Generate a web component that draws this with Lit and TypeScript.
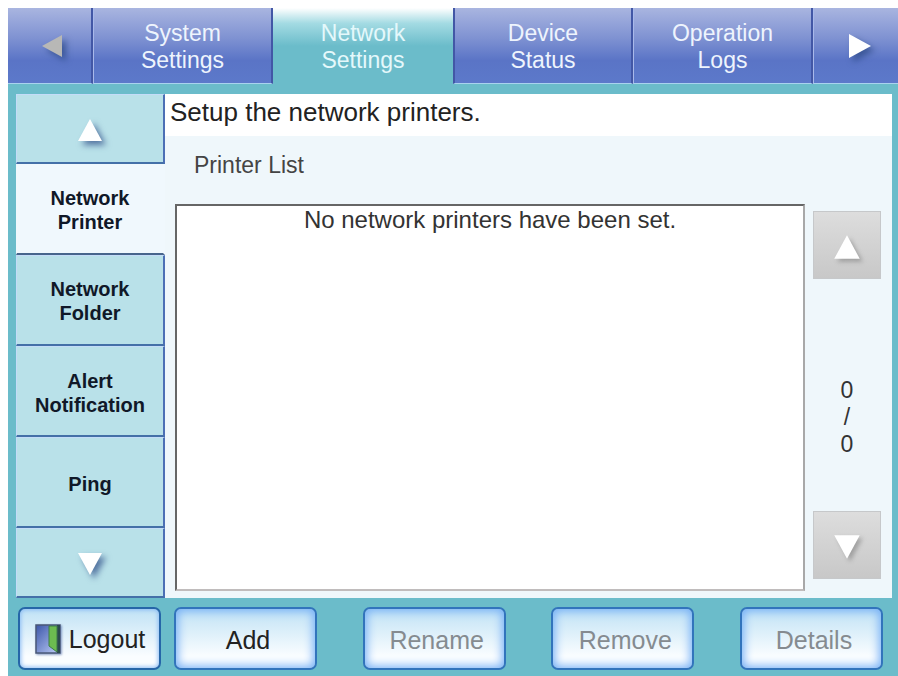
import { LitElement, html, css, svg } from "lit";
import { customElement, state } from "lit/decorators.js";
import { classMap } from "lit/directives/class-map.js";

const arrows: Record<string, string> = {
  up: "M16 5 L28 27 L4 27 Z",
  down: "M4 5 L28 5 L16 27 Z",
  left: "M5 16 L25 5 L25 27 Z",
  right: "M6 4 L28 16 L6 28 Z",
};

function arrow(direction: string, kind: string) {
  return html`<svg class="arrow ${kind}" viewBox="0 0 32 32" aria-hidden="true">
    ${svg`<path d=${arrows[direction]} />`}
  </svg>`;
}

const tabs = [
  ["System", "Settings"],
  ["Network", "Settings"],
  ["Device", "Status"],
  ["Operation", "Logs"],
];

const sections = [["Network", "Printer"], ["Network", "Folder"], ["Alert", "Notification"], ["Ping"]];

@customElement("app-root")
export class AppRoot extends LitElement {
  @state() private tab = 1;
  @state() private section = 0;

  static styles = css`
    :host {
      display: flex;
      flex-direction: column;
      box-sizing: border-box;
      min-height: 100vh;
      padding: 8px 0 0 8px;
      background: #fff;
      font-family: "Liberation Sans", Arial, sans-serif;
      color: #222;
    }
    * {
      box-sizing: border-box;
    }
    button {
      margin: 0;
      padding: 0;
      border: 0;
      font: inherit;
      color: inherit;
      background: none;
    }
    span {
      display: block;
    }
    .arrow {
      display: block;
      width: 32px;
      height: 32px;
      fill: #fff;
      filter: drop-shadow(4px 4px 3px rgba(40, 70, 130, 0.7));
    }
    .tabs {
      display: grid;
      grid-template-columns: 85fr repeat(4, 180fr) 85fr;
      height: 76px;
      background: #6bbcca;
    }
    .tab {
      padding-top: 2px;
      font-size: 23px;
      line-height: 27px;
      color: #eef4fd;
      border-right: 2px solid #4257a6;
      border-bottom: 1px solid #a9d3ee;
      background: linear-gradient(#a9b5e0, #7f92d2 40%, #5a74c6 70%, #5c79ca);
    }
    .tab.step {
      display: flex;
      align-items: center;
      justify-content: center;
      padding: 0 0 0 6px;
    }
    .tab.active {
      border-right: 0;
      border-bottom: 0;
      color: #e4f8fb;
      background: linear-gradient(#fff, #a4dbe3 20%, #6bbcca 50%);
    }
    .tab + .tab:not(.active) {
      border-left: 1px solid #a9b9ea;
    }
    .tab.active + .tab:not(.active) {
      border-left: 2px solid #4257a6;
    }
    .tab:last-child {
      border-right: 0;
    }
    .arrow.dim {
      fill: #b8b8b6;
    }
    .frame {
      flex: 1;
      display: flex;
      flex-direction: column;
      padding: 10px 6px 6px 8px;
      background: #6bbcca;
    }
    .body {
      flex: 1;
      display: flex;
    }
    .side {
      width: 149px;
      display: flex;
      flex-direction: column;
    }
    .item {
      flex: 92 1 0;
      display: flex;
      flex-direction: column;
      align-items: center;
      justify-content: center;
      padding-top: 3px;
      font-size: 20px;
      line-height: 24px;
      font-weight: bold;
      color: #101828;
      background: #b9e1e9;
      border: 1px solid #c4dcf8;
      border-right: 2px solid #4c6fb5;
      border-bottom: 2px solid #4470a8;
    }
    .item.step {
      flex-grow: 69;
    }
    .item.active {
      background: #f0f8fd;
      border-color: #f0f8fd;
      border-bottom-color: #47658c;
    }
    .main {
      flex: 1;
      display: flex;
      flex-direction: column;
      background: #eff7fb;
    }
    h1 {
      margin: 0;
      height: 42px;
      padding: 3px 0 0 5px;
      font-size: 26px;
      line-height: 30px;
      font-weight: normal;
      background: #fff;
    }
    h2 {
      margin: 0;
      height: 68px;
      padding: 16px 0 0 29px;
      font-size: 23px;
      line-height: 27px;
      font-weight: normal;
      color: #444;
    }
    .row {
      flex: 1;
      display: flex;
      gap: 8px;
      padding: 0 11px 7px 10px;
    }
    .list {
      flex: 1;
      border: 2px solid #666;
      border-right-color: #a8a8a8;
      border-bottom-color: #c0bcbc;
      background: #fff;
      font-size: 24px;
      line-height: 28px;
      text-align: center;
      color: #333;
    }
    .list p {
      margin: 0;
    }
    .scroll {
      width: 68px;
      display: flex;
      flex-direction: column;
      justify-content: space-between;
      align-items: center;
      padding: 7px 0 12px;
    }
    .scroll button {
      width: 68px;
      height: 68px;
      padding-top: 4px;
      display: grid;
      place-items: center;
      border: 1px solid #c6c8ca;
      background: linear-gradient(#dddddd, #c8c8c8);
    }
    .arrow.grey {
      width: 34px;
      height: 34px;
      filter: drop-shadow(3px 3px 2px rgba(90, 90, 90, 0.4));
    }
    .count {
      padding-top: 44px;
      font-size: 23px;
      line-height: 27px;
      text-align: center;
      color: #333;
    }
    .foot {
      display: flex;
      align-items: center;
      gap: 13px;
      padding: 9px 9px 0 2px;
    }
    .actions {
      flex: 1;
      display: flex;
      justify-content: space-between;
    }
    .foot button {
      width: 143px;
      height: 63px;
      padding: 3px 0 0 5px;
      font-size: 25px;
      line-height: 30px;
      border: 2px solid #3274bc;
      border-radius: 7px;
      color: #222;
      background: linear-gradient(#c0e2f5, #fafdff 80%);
      box-shadow: inset 0 0 10px 2px #76b0f6;
    }
    .foot button:disabled {
      color: #858b90;
    }
    .foot .logout {
      display: flex;
      align-items: center;
      justify-content: center;
      gap: 7px;
      padding: 0;
      border-color: #2666a8;
      box-shadow: inset 0 0 4px 1px #8cbcf4;
    }
    .door {
      width: 28px;
      height: 32px;
      filter: drop-shadow(1px 1px 1px rgba(50, 80, 150, 0.6));
    }
  `;

  render() {
    return html`
      <nav class="tabs" aria-label="Settings groups">
        <button class="tab step" aria-label="Previous tabs">${arrow("left", "dim")}</button>
        ${tabs.map(
          (lines, i) => html`<button
            class=${classMap({ tab: true, active: i === this.tab })}
            @click=${() => (this.tab = i)}
          >
            ${lines.map((l) => html`<span>${l}</span>`)}
          </button>`
        )}
        <button class="tab step" aria-label="Next tabs">${arrow("right", "")}</button>
      </nav>
      <div class="frame">
        <div class="body">
          <nav class="side" aria-label="Sections">
            <button class="item step" aria-label="Previous sections">${arrow("up", "")}</button>
            ${sections.map(
              (lines, i) => html`<button
                class=${classMap({ item: true, active: i === this.section })}
                @click=${() => (this.section = i)}
              >
                ${lines.map((l) => html`<span>${l}</span>`)}
              </button>`
            )}
            <button class="item step" aria-label="Next sections">${arrow("down", "")}</button>
          </nav>
          <main class="main">
            <h1>Setup the network printers.</h1>
            <h2>Printer List</h2>
            <div class="row">
              <div class="list"><p>No network printers have been set.</p></div>
              <div class="scroll">
                <button aria-label="Scroll up">${arrow("up", "grey")}</button>
                <div class="count"><span>0</span><span>/</span><span>0</span></div>
                <button aria-label="Scroll down">${arrow("down", "grey")}</button>
              </div>
            </div>
          </main>
        </div>
        <footer class="foot">
          <button class="logout">
            <svg class="door" viewBox="0 0 28 32" aria-hidden="true">
              <defs>
                <linearGradient id="room" x1="0" y1="0" x2="1" y2="1">
                  <stop offset="0" stop-color="#3c56a8" />
                  <stop offset="1" stop-color="#c0d0fa" />
                </linearGradient>
              </defs>
              <rect x="2" y="2" width="24" height="28" fill="url(#room)" stroke="#4a5878" stroke-width="1.5" />
              <path d="M24.5 2 V30" stroke="#2c4a50" stroke-width="3" />
              <path d="M15 3 L23 3 V29 L15 23 Z" fill="#6cbc50" stroke="#3c7a48" stroke-width="1" />
            </svg>
            <span>Logout</span>
          </button>
          <div class="actions">
            <button>Add</button>
            <button disabled>Rename</button>
            <button disabled>Remove</button>
            <button disabled>Details</button>
          </div>
        </footer>
      </div>
    `;
  }
}
